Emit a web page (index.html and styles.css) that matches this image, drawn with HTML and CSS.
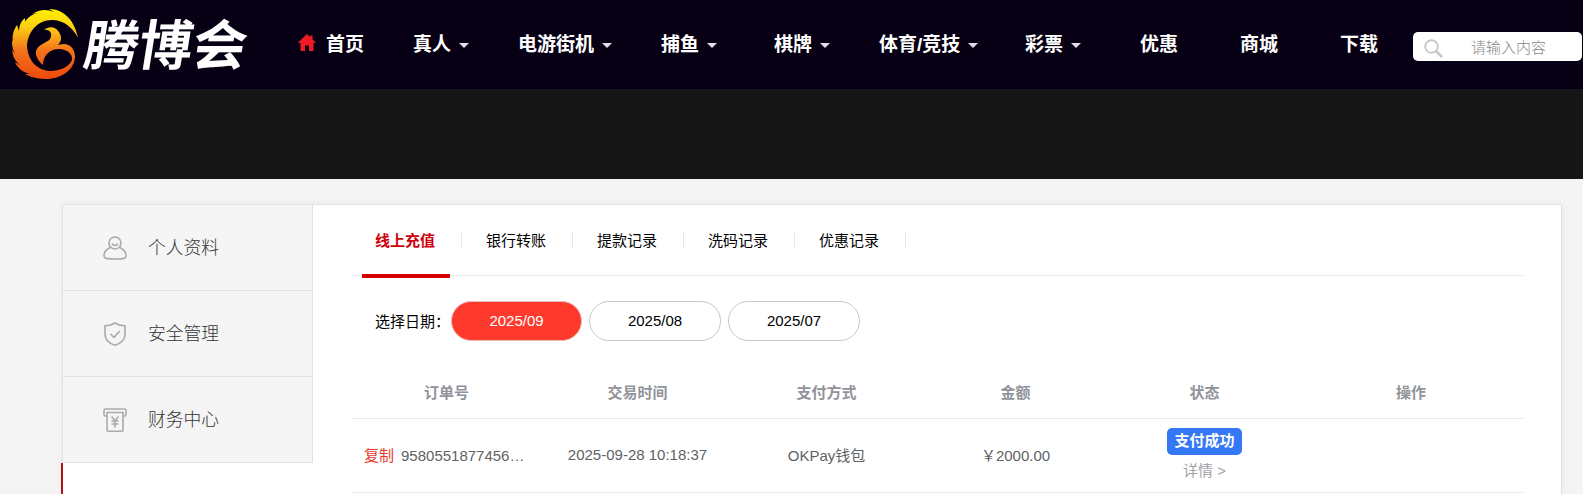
FILE: index.html
```html
<!DOCTYPE html>
<html lang="zh-CN">
<head>
    <meta charset="UTF-8">
    <meta name="viewport" content="width=device-width, initial-scale=1.0">
    <title>腾博会</title>
    <link rel="stylesheet" href="styles.css">
</head>
<body>
    <header class="header">
        <a class="logo">
            <svg class="logo-mark" width="68" height="72" viewBox="11 8 68 72">
                <defs>
                    <linearGradient id="fire" x1="0" y1="9" x2="0" y2="79" gradientUnits="userSpaceOnUse">
                        <stop offset="0" stop-color="#fff200"/>
                        <stop offset="0.25" stop-color="#fcd010"/>
                        <stop offset="0.6" stop-color="#f4711b"/>
                        <stop offset="1" stop-color="#ee4a0c"/>
                    </linearGradient>
                </defs>
                <path fill="url(#fire)" d="M78 38 C75 22 65 9 49 9 L54 12 C47 9 40 9 32 14 L38 12.500 C31 15 27 18 25 22 L25 18 C21 21 19 26 19 31 L17 25 C13 31 12 36 13 42 L12 40 C12 47 13 51 16 55 L12 50 C13 58 16 62 21 66 L15 62 C18 69 23 72 30 74 L25 74 C32 78 40 79 48 79 C62 78 74 70 75 57 C75 49 70 44 64 44 C61 44 60 45 58 45 C61 42 62 38 60 34 C57 27 50 25 44 30 C50 29 53 34 50 39 C47 43 38 44 36 51 C35 56 39 62 43 65 C43 56 49 49 59 49 C67 49 73 54 72 60 C69 67 60 71 50 71 C36 70 28 60 27 46 C28 31 38 20 52 20 C64 20 73 28 78 38 Z"/>
            </svg>
            <span class="logo-text">腾博会</span>
        </a>
        <nav class="nav">
            <a class="home">
                <svg width="18" height="17" viewBox="0 0 18 17"><path fill="#ed1c24" d="M9 0 L0 8.5 L1.5 9 H2.5 V17 H7 V11.5 H11 V17 H15.5 V9 H18 L14.5 5.3 V1.5 H12.3 V3.2 Z"/></svg>
                首页
            </a>
            <a>真人<i class="caret"></i></a>
            <a>电游街机<i class="caret"></i></a>
            <a>捕鱼<i class="caret"></i></a>
            <a>棋牌<i class="caret"></i></a>
            <a>体育/竞技<i class="caret"></i></a>
            <a>彩票<i class="caret"></i></a>
            <a>优惠</a>
            <a>商城</a>
            <a>下载</a>
        </nav>
        <div class="search">
            <svg width="19" height="19" viewBox="0 0 19 19" fill="none" stroke="#c6c6c6"><circle cx="7.5" cy="7.5" r="6.3" stroke-width="1.8"/><path d="M12 12 L18 18" stroke-width="2.6"/></svg>
            <span>请输入内容</span>
        </div>
    </header>
    <div class="banner"></div>

    <div class="main">
        <ul class="side">
            <li>
                <svg width="24" height="24" viewBox="0 0 24 24"><path d="M7.2 11.4 C3.5 13 1 16.5 1 20 C1 22.3 3 23 12 23 C21 23 23 22.3 23 20 C23 16.5 20.5 13 16.8 11.4"/><circle cx="12" cy="7" r="6"/><path d="M9.3 7.5 C10 10.2 14 10.2 14.7 7.5"/></svg>
                个人资料
            </li>
            <li>
                <svg width="24" height="24" viewBox="0 0 24 24"><path d="M12 1 C9 3 5.5 3.7 2 3.8 V12 C2 18 6 21.5 12 23.2 C18 21.5 22 18 22 12 V3.8 C18.5 3.7 15 3 12 1 Z"/><path d="M7.5 12 L11 15.3 L16.8 9"/></svg>
                安全管理
            </li>
            <li>
                <svg width="24" height="24" viewBox="0 0 24 24"><path d="M4 8 H2.5 C1.5 8 1 7.5 1 6.5 V2.5 C1 1.5 1.5 1 2.5 1 H21.5 C22.5 1 23 1.5 23 2.5 V6.5 C23 7.5 22.5 8 21.5 8 H20"/><path d="M4 4.5 H20 V22 C20 23 19.5 23.3 18.5 23.3 H5.5 C4.5 23.3 4 23 4 22 Z"/><path d="M8.5 8.5 L12 12.5 L15.5 8.5 M12 12.5 V19.5 M8.5 13 H15.5 M8.5 16 H15.5"/></svg>
                财务中心
            </li>
            <li class="active"></li>
        </ul>
        <div class="content">
            <ul class="tabs">
                <li class="on">线上充值</li>
                <li>银行转账</li>
                <li>提款记录</li>
                <li>洗码记录</li>
                <li>优惠记录</li>
            </ul>
            <div class="dates">
                <span class="label">选择日期：</span>
                <a class="date on">2025/09</a>
                <a class="date">2025/08</a>
                <a class="date">2025/07</a>
            </div>
            <table class="orders">
                <tr>
                    <th class="first">订单号</th>
                    <th>交易时间</th>
                    <th>支付方式</th>
                    <th>金额</th>
                    <th>状态</th>
                    <th class="last">操作</th>
                </tr>
                <tr>
                    <td class="order"><a class="copy">复制</a>9580551877456…</td>
                    <td>2025-09-28 10:18:37</td>
                    <td>OKPay钱包</td>
                    <td>￥2000.00</td>
                    <td><span class="badge">支付成功</span><a class="detail">详情 &gt;</a></td>
                    <td></td>
                </tr>
            </table>
        </div>
    </div>
</body>
</html>
```
FILE: styles.css
```css
* {
    box-sizing: border-box;
}
body {
    margin: 0;
    height: 494px;
    overflow: hidden;
    background-color: #f4f4f4;
    font: 15px "Liberation Sans", "Noto Sans CJK SC", sans-serif;
    color: #000;
}
ul {
    list-style: none;
    margin: 0;
    padding: 0;
}
.header {
    display: flex;
    height: 89px;
    background-color: #070014;
    color: #fff;
}
.logo {
    display: flex;
    width: 298px;
    padding: 8px 0 0 11px;
}
.logo-mark {
    flex: none;
}
.logo-text {
    margin-left: 6px;
    font-size: 54px;
    line-height: 76px;
    height: 76px;
    font-weight: bold;
    white-space: nowrap;
    transform: skewX(-9deg);
}
.nav {
    display: grid;
    grid-template-columns: 115px 105px 143px 113px 105px 146px 115px 100px 100px 74px;
    font-size: 19px;
    font-weight: bold;
    line-height: 90px;
    height: 90px;
    white-space: nowrap;
}
.nav a {
    display: flex;
    align-items: center;
}
.home svg {
    margin: 0 10px 6px 0;
}
.caret {
    margin: 1px 0 0 8px;
    border: 5px solid transparent;
    border-top-color: #e4dcea;
    border-bottom: 0;
}
.search {
    display: flex;
    align-items: center;
    width: 169px;
    height: 29px;
    margin: 32px 0 0 -1px;
    padding-left: 11px;
    border-radius: 5px;
    background-color: #fff;
    color: #888;
    font-weight: 300;
}
.search svg {
    margin-top: 3px;
}
.search span {
    margin-left: 28px;
}
.banner {
    height: 90px;
    background-color: #161616;
}
.main {
    display: flex;
    width: 1500px;
    height: 290px;
    margin: 25px 0 0 62px;
    border: 1px solid #e2e2e2;
    border-bottom: 0;
    background-color: #fff;
    box-shadow: 0 0 6px rgba(0, 0, 0, 0.06);
}
.side {
    width: 250px;
}
.side li {
    display: flex;
    align-items: center;
    height: 86px;
    padding: 0 0 4px 40px;
    border-right: 1px solid #e2e2e2;
    border-bottom: 1px solid #e2e2e2;
    background-color: #f5f5f5;
    color: #333;
    font-size: 17.8px;
    font-weight: 300;
}
.side svg {
    margin: 5px 21px 0 0;
    fill: none;
    stroke: #aaa;
    stroke-width: 1.6;
}
.side .active {
    height: 31px;
    margin-left: -2px;
    border: 0;
    border-left: 2px solid #b01218;
    background-color: #fff;
}
.content {
    width: 1171px;
    margin-left: 39px;
}
.tabs {
    display: flex;
    height: 71px;
    padding-left: 10px;
    border-bottom: 1px solid #e8e8e8;
}
.tabs li {
    display: flex;
    align-items: center;
    width: 111px;
    height: 73px;
    padding: 0 0 4px 24px;
    background: linear-gradient(#e8e8e8, #e8e8e8) no-repeat right 26px / 1px 18px;
}
.tabs li:first-child {
    width: 100px;
    padding-left: 13px;
}
.tabs .on {
    color: #d0000a;
    font-weight: bold;
    background-image: linear-gradient(#e8e8e8, #e8e8e8), linear-gradient(#d40000, #d40000);
    background-position: right 26px, 0 69px;
    background-size: 1px 18px, 88px 4px;
}
.dates {
    display: flex;
    align-items: center;
    height: 40px;
    margin-top: 25px;
    padding-left: 23px;
}
.label {
    width: 76px;
    padding-bottom: 2px;
    white-space: nowrap;
}
.date {
    width: 132px;
    height: 40px;
    margin-right: 7px;
    border: 1px solid #c8c8c8;
    border-radius: 20px;
    line-height: 38px;
    text-align: center;
}
.date.on {
    width: 131px;
    border-color: #e8bcb8;
    background-color: #ff3a2d;
    color: #fff;
}
.orders {
    width: 1171px;
    margin-top: 25px;
    border-spacing: 0;
    table-layout: fixed;
}
th, td {
    width: 189px;
    padding: 0;
    border-bottom: 1px solid #e8e8e8;
    text-align: center;
}
.first {
    width: 191px;
    padding-right: 2px;
}
.last {
    width: 224px;
}
th {
    height: 53px;
    padding-bottom: 1px;
    color: #909399;
}
td {
    height: 74px;
    padding-bottom: 3px;
    color: #606266;
}
.order {
    padding-left: 12px;
    text-align: left;
}
.copy {
    margin-right: 7px;
    color: #e8392f;
}
.badge {
    display: block;
    width: 75px;
    height: 27px;
    margin: 0 auto;
    border-radius: 5px;
    background-color: #3478f6;
    color: #fff;
    font-weight: bold;
    line-height: 26px;
}
.detail {
    display: block;
    margin-top: 4px;
    color: #a0a0a5;
}
```
